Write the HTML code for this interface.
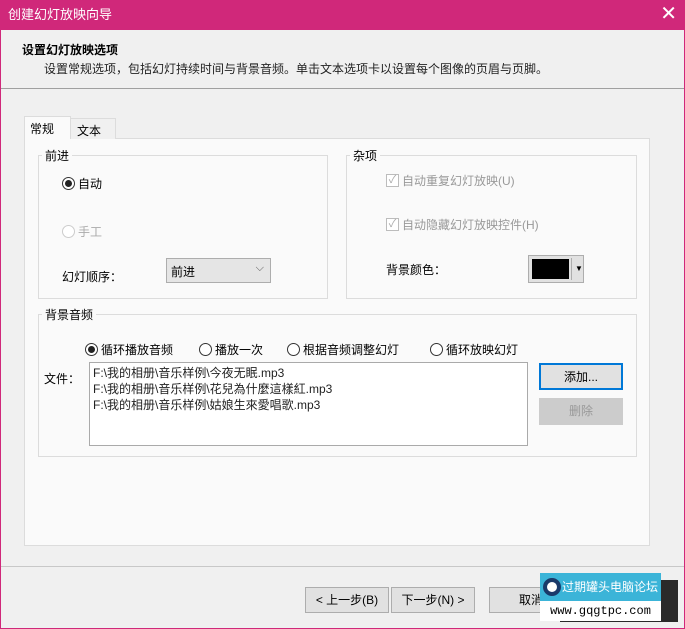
<!DOCTYPE html><html><head><meta charset="utf-8"><style>
*{box-sizing:border-box;margin:0;padding:0}
body{width:685px;height:629px;overflow:hidden;background:#f0f0f0;font-family:"Liberation Sans","Noto Sans CJK SC",sans-serif;font-size:12px;color:#000;position:relative}
.a{position:absolute}
.frame{left:0;top:0;width:685px;height:629px;border:1px solid #d0287a}
.grp{border:1px solid #dcdcdc}
.lg{background:#fafafa;padding:0 3px}
.btn{border:1px solid #adadad;background:#e1e1e1;text-align:center;line-height:24px}
.rad{width:13px;height:13px;border:1px solid #333;border-radius:50%;background:#fff}
.rad.on::after{content:"";position:absolute;left:2px;top:2px;width:7px;height:7px;border-radius:50%;background:#222}
.chk{width:13px;height:13px;border:1px solid #bcbcbc;background:#fff;color:#aaa;font-size:11px;line-height:11px;text-align:center}
</style></head><body>
<div class="a frame"></div>
<div class="a" style="left:0;top:0;width:685px;height:30px;background:#d0287a;color:#fff;font-size:13px;line-height:30px;padding-left:8px">创建幻灯放映向导</div>
<div class="a" style="right:8px;top:2px;color:#fff;font-size:20px;line-height:24px">✕</div>
<div class="a" style="left:22px;top:41px;font-weight:bold;font-size:12px">设置幻灯放映选项</div>
<div class="a" style="left:44px;top:60px;color:#222">设置常规选项，包括幻灯持续时间与背景音频。单击文本选项卡以设置每个图像的页眉与页脚。</div>
<div class="a" style="left:1px;top:88px;width:683px;height:1px;background:#a0a0a0"></div>
<div class="a" style="left:24px;top:138px;width:626px;height:408px;background:#fafafa;border:1px solid #dcdcdc"></div>
<div class="a" style="left:70px;top:118px;width:46px;height:21px;border:1px solid #dcdcdc;border-bottom:none;background:#f0f0f0;padding:3px 0 0 6px">文本</div>
<div class="a" style="left:24px;top:116px;width:47px;height:23px;border:1px solid #dcdcdc;border-bottom:none;background:#fafafa;padding:3px 0 0 5px">常规</div>

<div class="a grp" style="left:38px;top:155px;width:290px;height:144px"></div>
<div class="a lg" style="left:42px;top:147px">前进</div>
<div class="a rad on" style="left:62px;top:177px"></div><div class="a" style="left:78px;top:175px">自动</div>
<div class="a rad" style="left:62px;top:225px;border-color:#ccc"></div><div class="a" style="left:78px;top:223px;color:#aaa">手工</div>
<div class="a" style="left:62px;top:268px">幻灯顺序：</div>
<div class="a" style="left:166px;top:258px;width:105px;height:25px;border:1px solid #adadad;background:#e5e5e5;padding:4px 0 0 4px">前进<span style="position:absolute;right:6px;top:3px;color:#555;font-size:11px">⌵</span></div>

<div class="a grp" style="left:346px;top:155px;width:291px;height:144px"></div>
<div class="a lg" style="left:350px;top:147px">杂项</div>
<div class="a chk" style="left:386px;top:174px">✓</div><div class="a" style="left:402px;top:172px;color:#999">自动重复幻灯放映(U)</div>
<div class="a chk" style="left:386px;top:218px">✓</div><div class="a" style="left:402px;top:216px;color:#999">自动隐藏幻灯放映控件(H)</div>
<div class="a" style="left:386px;top:261px">背景颜色：</div>
<div class="a" style="left:528px;top:255px;width:56px;height:28px;border:1px solid #adadad;background:#e1e1e1"><div class="a" style="left:3px;top:3px;width:37px;height:20px;background:#000"></div><div class="a" style="left:42px;top:2px;width:1px;height:22px;background:#adadad"></div><div class="a" style="left:46px;top:8px;font-size:8px">▼</div></div>

<div class="a grp" style="left:38px;top:314px;width:599px;height:143px"></div>
<div class="a lg" style="left:42px;top:306px">背景音频</div>
<div class="a rad on" style="left:85px;top:343px"></div><div class="a" style="left:101px;top:341px">循环播放音频</div>
<div class="a rad" style="left:199px;top:343px"></div><div class="a" style="left:215px;top:341px">播放一次</div>
<div class="a rad" style="left:287px;top:343px"></div><div class="a" style="left:303px;top:341px">根据音频调整幻灯</div>
<div class="a rad" style="left:430px;top:343px"></div><div class="a" style="left:446px;top:341px">循环放映幻灯</div>
<div class="a" style="left:44px;top:370px">文件：</div>
<div class="a" style="left:89px;top:362px;width:439px;height:84px;border:1px solid #aaa;background:#fff;padding:2px 3px;line-height:16px;color:#222">F:\我的相册\音乐样例\今夜无眠.mp3<br>F:\我的相册\音乐样例\花兒為什麼這樣紅.mp3<br>F:\我的相册\音乐样例\姑娘生來愛唱歌.mp3</div>
<div class="a btn" style="left:539px;top:363px;width:84px;height:27px;border:2px solid #0078d7">添加...</div>
<div class="a btn" style="left:539px;top:398px;width:84px;height:27px;border-color:#ccc;background:#ccc;color:#999">删除</div>

<div class="a" style="left:1px;top:566px;width:683px;height:1px;background:#c8c8c8"></div>
<div class="a btn" style="left:305px;top:587px;width:84px;height:26px">&lt; 上一步(B)</div>
<div class="a btn" style="left:391px;top:587px;width:84px;height:26px">下一步(N) &gt;</div>
<div class="a btn" style="left:489px;top:587px;width:84px;height:26px">取消</div>
<div class="a" style="left:560px;top:580px;width:118px;height:42px;background:#2a2a2a"></div>
<div class="a" style="left:540px;top:573px;width:121px;height:28px;background:#3bb4d8;color:#fff;font-size:12px;line-height:28px;padding-left:22px;white-space:nowrap">过期罐头电脑论坛</div>
<div class="a" style="left:543px;top:578px;width:18px;height:18px;border-radius:50%;border:4px solid #1a3a6a;background:#fff"></div>
<div class="a" style="left:540px;top:601px;width:121px;height:20px;background:#fff;font-family:'Liberation Mono',monospace;font-size:12px;line-height:20px;text-align:center">www.gqgtpc.com</div>
</body></html>
